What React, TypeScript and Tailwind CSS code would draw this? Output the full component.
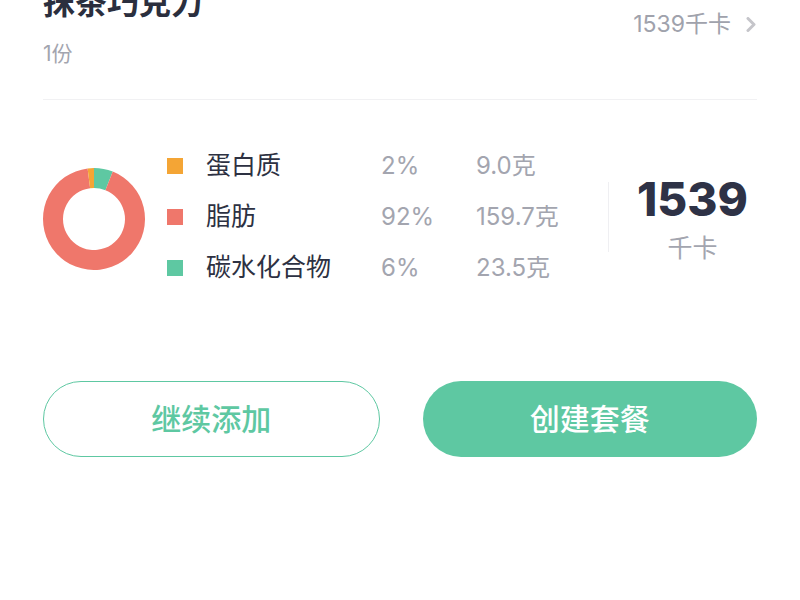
import React from 'react';

const FONT = { fontFamily: 'Inter, "Noto Sans CJK SC", sans-serif' };

interface Nutrient {
  name: string;
  color: string;
  percent: string;
  amount: string;
}

const nutrients: Nutrient[] = [
  { name: '蛋白质', color: 'bg-[#f4a535]', percent: '2%', amount: '9.0克' },
  { name: '脂肪', color: 'bg-[#ef776b]', percent: '92%', amount: '159.7克' },
  { name: '碳水化合物', color: 'bg-[#5ec8a2]', percent: '6%', amount: '23.5克' },
];

// annulus sector, fractions of a full turn measured clockwise from 12 o'clock
function sector(cx: number, cy: number, ro: number, ri: number, a0: number, a1: number) {
  const p = (r: number, a: number) => {
    const t = a * 2 * Math.PI;
    return [cx + r * Math.sin(t), cy - r * Math.cos(t)];
  };
  const large = a1 - a0 > 0.5 ? 1 : 0;
  const [x0, y0] = p(ro, a0);
  const [x1, y1] = p(ro, a1);
  const [x2, y2] = p(ri, a1);
  const [x3, y3] = p(ri, a0);
  return `M${x0} ${y0} A${ro} ${ro} 0 ${large} 1 ${x1} ${y1} L${x2} ${y2} A${ri} ${ri} 0 ${large} 0 ${x3} ${y3} Z`;
}

function Donut() {
  return (
    <svg width="102" height="102" viewBox="0 0 102 102">
      <path d={sector(51, 51, 51, 31, 0, 0.06)} fill="#5ec8a2" />
      <path d={sector(51, 51, 51, 31, 0.06, 0.98)} fill="#ef776b" />
      <path d={sector(51, 51, 51, 31, 0.98, 1)} fill="#f4a535" />
    </svg>
  );
}

export default function App() {
  return (
    <div className="w-[800px] h-[600px] bg-white overflow-hidden px-[43px]" style={FONT}>
      <div className="h-[100px] border-b border-[#f1f1f3] flex justify-between">
        <div className="flex flex-col">
          <div className="mt-[-13px] text-[32px] leading-[32px] font-bold text-[#2b2f3e]">抹茶巧克力</div>
          <div className="mt-[24px] text-[21px] leading-[21px] text-[#a3a5af]">1份</div>
        </div>
        <div className="flex items-center h-[22px] mt-[13px]">
          <span className="text-[23px] leading-[22px] text-[#a0a2ac]">1539千卡</span>
          <svg width="12" height="15" viewBox="0 0 12 15" className="ml-[14px]">
            <path d="M3 1.5 L9 7.5 L3 13.5" fill="none" stroke="#c5c5ca" strokeWidth="3" strokeLinecap="round" strokeLinejoin="round" />
          </svg>
        </div>
      </div>

      <div className="mt-[40px] flex items-center">
        <div className="pt-[5px]">
          <Donut />
        </div>
        <div className="ml-[22px] flex flex-col">
          {nutrients.map(n => (
            <div key={n.name} className="h-[51px] flex items-center">
              <div className={`w-[16px] h-[16px] ${n.color}`} />
              <div className="ml-[23px] w-[175px] text-[25px] leading-[25px] text-[#2d3142]">{n.name}</div>
              <div className="w-[95px] text-[24px] leading-[24px] text-[#a3a5af]">{n.percent}</div>
              <div className="w-[132px] text-[24px] leading-[24px] text-[#a3a5af]">{n.amount}</div>
            </div>
          ))}
        </div>
        <div className="w-px h-[70px] bg-[#efeff2]" />
        <div className="ml-[28px] flex flex-col items-center">
          <div className="mt-[4px] text-[46px] leading-[46px] font-extrabold text-[#2e3246]">1539</div>
          <div className="mt-[14px] text-[25px] leading-[25px] text-[#a3a5af]">千卡</div>
        </div>
      </div>

      <div className="mt-[88px] flex gap-[43px]">
        <button className="flex-1 h-[76px] rounded-full border border-[#5ec8a2] bg-white text-[30px] font-medium text-[#5ec8a2]">
          继续添加
        </button>
        <button className="flex-1 h-[76px] rounded-full bg-[#5ec8a2] text-[30px] font-medium text-white">
          创建套餐
        </button>
      </div>
    </div>
  );
}
